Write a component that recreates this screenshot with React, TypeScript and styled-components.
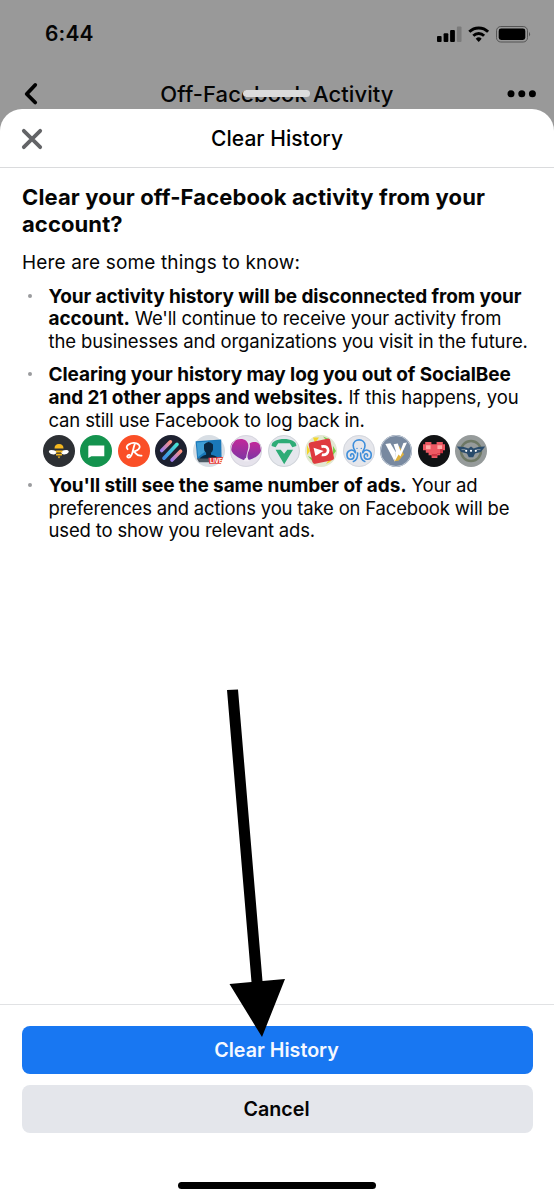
import React from 'react';
import styled, { createGlobalStyle } from 'styled-components';

const GlobalStyle = createGlobalStyle`
  *, *::before, *::after { box-sizing: border-box; }
  body { margin: 0; background: #fff; }
  button { border: 0; padding: 0; background: none; font: inherit; color: inherit; }
  svg { display: block; }
`;

const Screen = styled.div`
  position: relative;
  width: 554px;
  height: 1200px;
  display: flex;
  flex-direction: column;
  overflow: hidden;
  background: #999;
  color: #050505;
  font-family: Inter, 'Liberation Sans', sans-serif;
`;

const StatusBar = styled.div`
  height: 66px;
  flex: none;
  display: flex;
  justify-content: space-between;
  align-items: center;
  padding: 1px 23px 0 45px;
`;

const Clock = styled.span`
  font-size: 21px;
  font-weight: 560;
  line-height: 24px;
  letter-spacing: 0.15px;
`;

const NavBar = styled.div`
  position: relative;
  height: 43px;
  flex: none;
  display: grid;
  grid-template-columns: 30px 1fr 30px;
  padding: 16px 17px 0 23px;
`;

const NavTitle = styled.span`
  padding-right: 6px;
  text-align: center;
  font-size: 22px;
  font-weight: 550;
  line-height: 24px;
  letter-spacing: 0.1px;
  white-space: nowrap;
`;

const Grabber = styled.div`
  position: absolute;
  left: 243px;
  top: 24px;
  width: 67px;
  height: 7px;
  border-radius: 4px;
  background: #dcdcdc;
`;

const Sheet = styled.section`
  flex: 1;
  display: flex;
  flex-direction: column;
  background: #fff;
  border-radius: 22px 22px 0 0;
`;

const SheetHeader = styled.header`
  height: 59px;
  flex: none;
  display: grid;
  grid-template-columns: 32px 1fr 32px;
  align-items: center;
  padding: 1px 16px 0;
  border-bottom: 1px solid #dadbdd;
`;

const SheetTitle = styled.h1`
  margin: 0;
  text-align: center;
  font-size: 21px;
  line-height: 24px;
  font-weight: 550;
  letter-spacing: 0.06px;
  color: #000;
`;

const Body = styled.div`
  flex: 1;
  padding: 16px 22px 0;
`;

const Line = styled.span<{ $track?: number }>`
  display: block;
  white-space: nowrap;
  letter-spacing: ${(p) => p.$track ?? -0.16}px;
`;

const Strong = styled.b`
  font-size: 19px;
  line-height: 1;
  letter-spacing: -0.09px;
`;

const Question = styled.h2`
  margin: 0 0 12.7px;
  font-size: 22px;
  line-height: 27px;
  font-weight: 700;
`;

const Intro = styled.p`
  margin: 0 0 10px;
  font-size: 19px;
  line-height: 24px;
`;

const List = styled.ul`
  margin: 0;
  padding: 0;
  list-style: none;
`;

const Item = styled.li<{ $gap?: number }>`
  display: grid;
  grid-template-columns: 26.5px 1fr;
  margin-bottom: ${(p) => p.$gap ?? 0}px;
  font-size: 18.5px;
  line-height: 22.7px;
`;

const Dot = styled.span`
  width: 4px;
  height: 4px;
  margin: 9px 0 0 5.5px;
  border-radius: 50%;
  background: #9a9b9e;
`;

const AppRow = styled.div`
  display: flex;
  gap: 5.5px;
  margin: 0 0 6.4px 20.6px;
`;

const Footer = styled.footer`
  height: 196px;
  flex: none;
  display: flex;
  flex-direction: column;
  align-items: center;
  padding: 21px 21.5px 0;
  border-top: 1px solid #e1e2e4;
`;

const ActionButton = styled.button<{ $primary?: boolean }>`
  width: 100%;
  height: 48px;
  margin-bottom: 11px;
  border-radius: 8px;
  padding-right: 1px;
  font-size: 19.7px;
  font-weight: ${(p) => (p.$primary ? 600 : 580)};
  color: ${(p) => (p.$primary ? '#f4f8ff' : '#050505')};
  background: ${(p) => (p.$primary ? '#1877f2' : '#e4e6eb')};
`;

const HomeIndicator = styled.div`
  width: 198px;
  height: 7px;
  margin-top: 38px;
  border-radius: 4px;
  background: #000;
`;

const ArrowOverlay = styled.svg`
  position: absolute;
  left: 220px;
  top: 684px;
  pointer-events: none;
`;

const StatusIcons = () => (
  <svg width="95" height="20" viewBox="436 23 95 20">
    <rect x="437" y="35" width="4.6" height="6" rx="1" />
    <rect x="443.6" y="32.3" width="4.7" height="8.7" rx="1" />
    <rect x="450.1" y="29" width="4.8" height="12" rx="1" />
    <rect x="456.9" y="25.5" width="4.6" height="15.5" rx="1" fill="#7b7b7b" />
    <g fill="none" stroke="#000" strokeWidth="2.9">
      <path d="M469.3 30.8 a13.4 13.4 0 0 1 18.8 0" />
      <path d="M473.3 34.7 a7.8 7.8 0 0 1 10.8 0" />
    </g>
    <path d="M475.7 37.8 a4.3 4.3 0 0 1 6 0 l-3 3.2z" />
    <rect x="496.5" y="25.5" width="31" height="15.5" rx="4.3" fill="none" stroke="#555" />
    <rect x="498.7" y="27.6" width="26.6" height="11.4" rx="2.4" />
    <path d="M529 30.8 q2.1 2.4 0 4.8z" fill="#555" />
  </svg>
);

const Badge = ({ bg, ring, children }: { bg: string; ring?: string; children: React.ReactNode }) => (
  <svg width="32" height="32" viewBox="0 0 32 32">
    <circle cx="16" cy="16" r="16" fill={bg} />
    {children}
    {ring && <circle cx="16" cy="16" r="15.5" fill="none" stroke={ring} />}
  </svg>
);

const AppIcons = () => (
  <AppRow>
    <Badge bg="#2d3034">
      <path d="M5.8 16.3 q1.2-2.5 8 0 q-.8 4-4.4 3 q-3.2-.4-3.6-3z M25.8 16.3 q-1.2-2.5-8 0 q.8 4 4.4 3 q3.2-.4 3.6-3z" fill="#fff" />
      <path d="M11.5 13.6 q0-4.5 4.5-4.5 t4.5 4.5z M12.8 15.4h6.6v2.2h-6.6z M13 18.8h6v1.8h-6z M14.6 21.6h2.8l-1.4 1.8z" fill="#f5b81f" />
    </Badge>
    <Badge bg="#14934e">
      <path d="M9 10.6h15.3v10.6H11.4L8.3 23V11.3z" fill="#fff" />
    </Badge>
    <Badge bg="#fa4f27">
      <path d="M9.6 14.2 C6 10.6 13.6 6.8 18.6 8.4 C24 10.2 22 15.9 14.8 16.4 C18.2 16.4 17.8 21.7 23.6 20.6 M16.6 9.6 C14.7 14 14.8 22.4 10.8 22.6 C7.8 22.5 9.6 19.4 11.5 19.9" fill="none" stroke="#fff" strokeWidth="1.8" strokeLinecap="round" />
    </Badge>
    <Badge bg="#1d2130">
      <defs>
        <linearGradient id="stripeA" x1="0" y1="1" x2="1" y2="0"><stop stopColor="#9b7ded" /><stop offset="1" stopColor="#ff937f" /></linearGradient>
        <linearGradient id="stripeB" x1="0" y1="1" x2="1" y2="0"><stop stopColor="#418ce9" /><stop offset="1" stopColor="#48e3d2" /></linearGradient>
      </defs>
      <g fill="none" strokeWidth="3.6" strokeLinecap="round">
        <path d="M6.7 15.5 15.4 6.8" stroke="url(#stripeA)" />
        <path d="M9 23.2 22 9.3" stroke="url(#stripeB)" />
        <path d="M17 25 25.6 16.2" stroke="url(#stripeA)" />
      </g>
    </Badge>
    <Badge bg="#d8dee4">
      <path d="M2.6 6.2 28.2 4.6 28.6 23.4 4.2 24z" fill="#1a78b9" />
      <path d="M3.8 7.4 15 6.5 13 16 5 22z" fill="#3f9dd4" />
      <path d="M11 9.5 q4.5-5 9 0 v5 q-.5 2.4-2 3.2 v2 q7 1.4 7 4.5 H6.4 q1-3 6.7-4.5 v-2 q-2-1-2.1-4z" fill="#0a2740" />
      <path d="M3.8 23.6h25l-2 3.6H6z" fill="#4b5963" />
      <path d="M15.4 22.7 30 22 28 28.7H16.2z" fill="#e83431" />
      <text x="17" y="28" fill="#fff" fontFamily="Inter, sans-serif" fontSize="5.6" fontWeight="700">LIVE</text>
    </Badge>
    <Badge bg="#e6e3ec" ring="#d7d7df">
      <defs><linearGradient id="plum" x1="0" y1="0" x2="0" y2="1"><stop stopColor="#c2289a" /><stop offset="1" stopColor="#7c36a3" /></linearGradient></defs>
      <path d="M16 25.4 C8 23.7.2 18 .6 11.7 C1 5.3 11 1.6 16.4 6 C21.4 11 15.6 18 16 25.4z" fill="url(#plum)" />
      <path d="M18.2 25 C15.4 17.4 21.4 15 19.6 8.6 C25 5 32 8.2 31.4 14 C31 19.4 24.7 23.7 18.2 25z" fill="url(#plum)" />
      <path d="M13.4 26.2 q3-6.8 6 0z" fill="#f1edf4" />
    </Badge>
    <Badge bg="#e5e7ed" ring="#d1d5da">
      <path d="M3.6 10.9 C3 1.8 29 1.8 28.4 10.9 L24.3 12.2 21.8 8.3H10.2L7.6 12.2z" fill="#2eac77" />
      <path d="M7.6 14.8 12.7 14.8 16.1 18.8 19.3 14.8 25 14.8 16.2 29.2z" fill="#2eac77" />
    </Badge>
    <Badge bg="#e3e8d4">
      <path d="M8 2.6h6L10 8z M2 10v10l3-4z M21 29l4-6 4-1-4 5z" fill="#f4d629" />
      <path d="M18 1.5l7 3-2 3z M2.8 21l7 8 2-4z M28 11l3 5-3 4z" fill="#7bd04c" />
      <rect x="5.3" y="5.3" width="22" height="22" rx="2.5" transform="rotate(-12 16 16)" fill="#df3b40" />
      <path d="M16.4 11.6 C25.6 9.4 25 21.4 16.8 19.8" fill="none" stroke="#fff" strokeWidth="2.7" />
      <path d="M8.6 12.8 18.6 16 10.4 21z" fill="#fff" />
    </Badge>
    <Badge bg="#e5e6eb" ring="#d5d8df">
      <g fill="none" stroke="#3d8edb" strokeWidth="1.6" strokeLinecap="round">
        <path d="M12.4 17.6 C13 15.5 10.2 15 10.2 10.6 C10.2 3 22 3 22 10.6 C22 15 19.2 15.5 19.8 17.6" />
        <path d="M12.4 17.6 C9.5 12.8 3.4 15.6 4 20.6 C4.6 26 12 25 10.9 20.4 C10 17.6 6.9 18.8 7.8 21" />
        <path d="M19.8 17.6 C22.7 12.8 28.8 15.6 28.2 20.6 C27.6 26 20.2 25 21.3 20.4 C22.2 17.6 25.3 18.8 24.4 21" />
        <path d="M14.6 18 C14.8 22 13.6 25.4 10.4 26.4 M17.6 18 C17.4 22 18.6 25.4 21.8 26.4" />
      </g>
      <circle cx="14" cy="13.4" r=".7" fill="#3d8edb" /><circle cx="18.3" cy="13.4" r=".7" fill="#3d8edb" />
    </Badge>
    <Badge bg="#7889a0" ring="#c2cbd6">
      <path d="M5.4 9 10.4 8.3 15.8 17.2 14.6 26.4z" fill="#fff" />
      <path d="M19 11 24 19.6 18.8 25.4 14.2 26.3 17.1 17z" fill="#e0b23c" />
      <path d="M13.6 9.3 17.8 8.5 20.4 16 23.4 8 27 7.6 20.4 21.6 18.6 19.6 14.6 26.4 15.8 16z" fill="#fff" />
    </Badge>
    <Badge bg="#111214">
      <path d="M7.2 7h6.2v2.2h5.2V7h6.2v2.2H27v6h-2.2v2.6h-2.6v2.5h-2.8v2.8h-5.8v-2.8h-3v-2.5H7.8v-2.6H5v-6h2.2z" fill="#ee5963" />
      <path d="M8 10.3h4.6v4H8z M19.4 10.3h4.6v3.8h-4.6z" fill="#ffaaa6" />
      <path d="M22 14.3h3v4h-5.8v3h-5.4v-2.4H22z" fill="#cf3543" />
    </Badge>
    <Badge bg="#969b9b">
      <circle cx="16" cy="16" r="10" fill="none" stroke="#6e7865" strokeWidth="2.4" />
      <path d="M1.8 11.5 C7 11.4 10.6 12.2 13.4 13.6 L16 11.4 18.6 13.6 C21.4 12.2 25 11.4 30.2 11.5 L25.8 17 20 18.6 18.2 22.2 H13.8 L12 18.6 6.2 17z" fill="#294b6b" />
      <path d="M6.5 14.6h4 M21.5 14.6h4" stroke="#8495a2" />
      <g fill="#fff"><circle cx="11.2" cy="15.8" r="1.1" /><circle cx="16" cy="15.8" r="1.1" /><circle cx="20.8" cy="15.8" r="1.1" /></g>
    </Badge>
  </AppRow>
);

export default function App() {
  return (
    <>
      <GlobalStyle />
      <Screen>
        <StatusBar>
          <Clock>6:44</Clock>
          <StatusIcons />
        </StatusBar>
        <NavBar>
          <svg width="15" height="24" viewBox="0 0 15 24" fill="none" stroke="#000" strokeWidth="3.8" strokeLinecap="round" strokeLinejoin="round">
            <path d="M12.2 3 3.7 12 12.2 20.5" />
          </svg>
          <NavTitle>Off-Facebook Activity</NavTitle>
          <svg width="29" height="24" viewBox="0 0 29 24">
            <circle cx="4" cy="11.8" r="3.5" /><circle cx="14.8" cy="11.8" r="3.5" /><circle cx="25.4" cy="11.8" r="3.5" />
          </svg>
          <Grabber />
        </NavBar>
        <Sheet>
          <SheetHeader>
            <svg width="32" height="32" viewBox="0 0 32 32" stroke="#636467" strokeWidth="3.8" strokeLinecap="round">
              <path d="M7.8 7.8 24.2 24.2M24.2 7.8 7.8 24.2" />
            </svg>
            <SheetTitle>Clear History</SheetTitle>
          </SheetHeader>
          <Body>
            <Question>
              <Line $track={0.13}>Clear your off-Facebook activity from your</Line>
              <Line $track={0.1}>account?</Line>
            </Question>
            <Intro><Line $track={0.15}>Here are some things to know:</Line></Intro>
            <List>
              <Item $gap={10.4}>
                <Dot />
                <div>
                  <Line><Strong>Your activity history will be disconnected from your</Strong></Line>
                  <Line><Strong>account.</Strong> We'll continue to receive your activity from</Line>
                  <Line $track={-0.12}>the businesses and organizations you visit in the future.</Line>
                </div>
              </Item>
              <Item $gap={4.2}>
                <Dot />
                <div>
                  <Line><Strong>Clearing your history may log you out of SocialBee</Strong></Line>
                  <Line $track={-0.07}><Strong>and 21 other apps and websites.</Strong> If this happens, you</Line>
                  <Line>can still use Facebook to log back in.</Line>
                </div>
              </Item>
            </List>
            <AppIcons />
            <List>
              <Item>
                <Dot />
                <div>
                  <Line><Strong>You'll still see the same number of ads.</Strong> Your ad</Line>
                  <Line $track={-0.19}>preferences and actions you take on Facebook will be</Line>
                  <Line>used to show you relevant ads.</Line>
                </div>
              </Item>
            </List>
          </Body>
          <Footer>
            <ActionButton $primary>Clear History</ActionButton>
            <ActionButton>Cancel</ActionButton>
            <HomeIndicator />
          </Footer>
        </Sheet>
        <ArrowOverlay width="70" height="356" viewBox="220 684 70 356">
          <path d="M227 690 238 689.5 262.5 981 285 979 262 1037 229.5 984 251.5 982z" />
        </ArrowOverlay>
      </Screen>
    </>
  );
}
